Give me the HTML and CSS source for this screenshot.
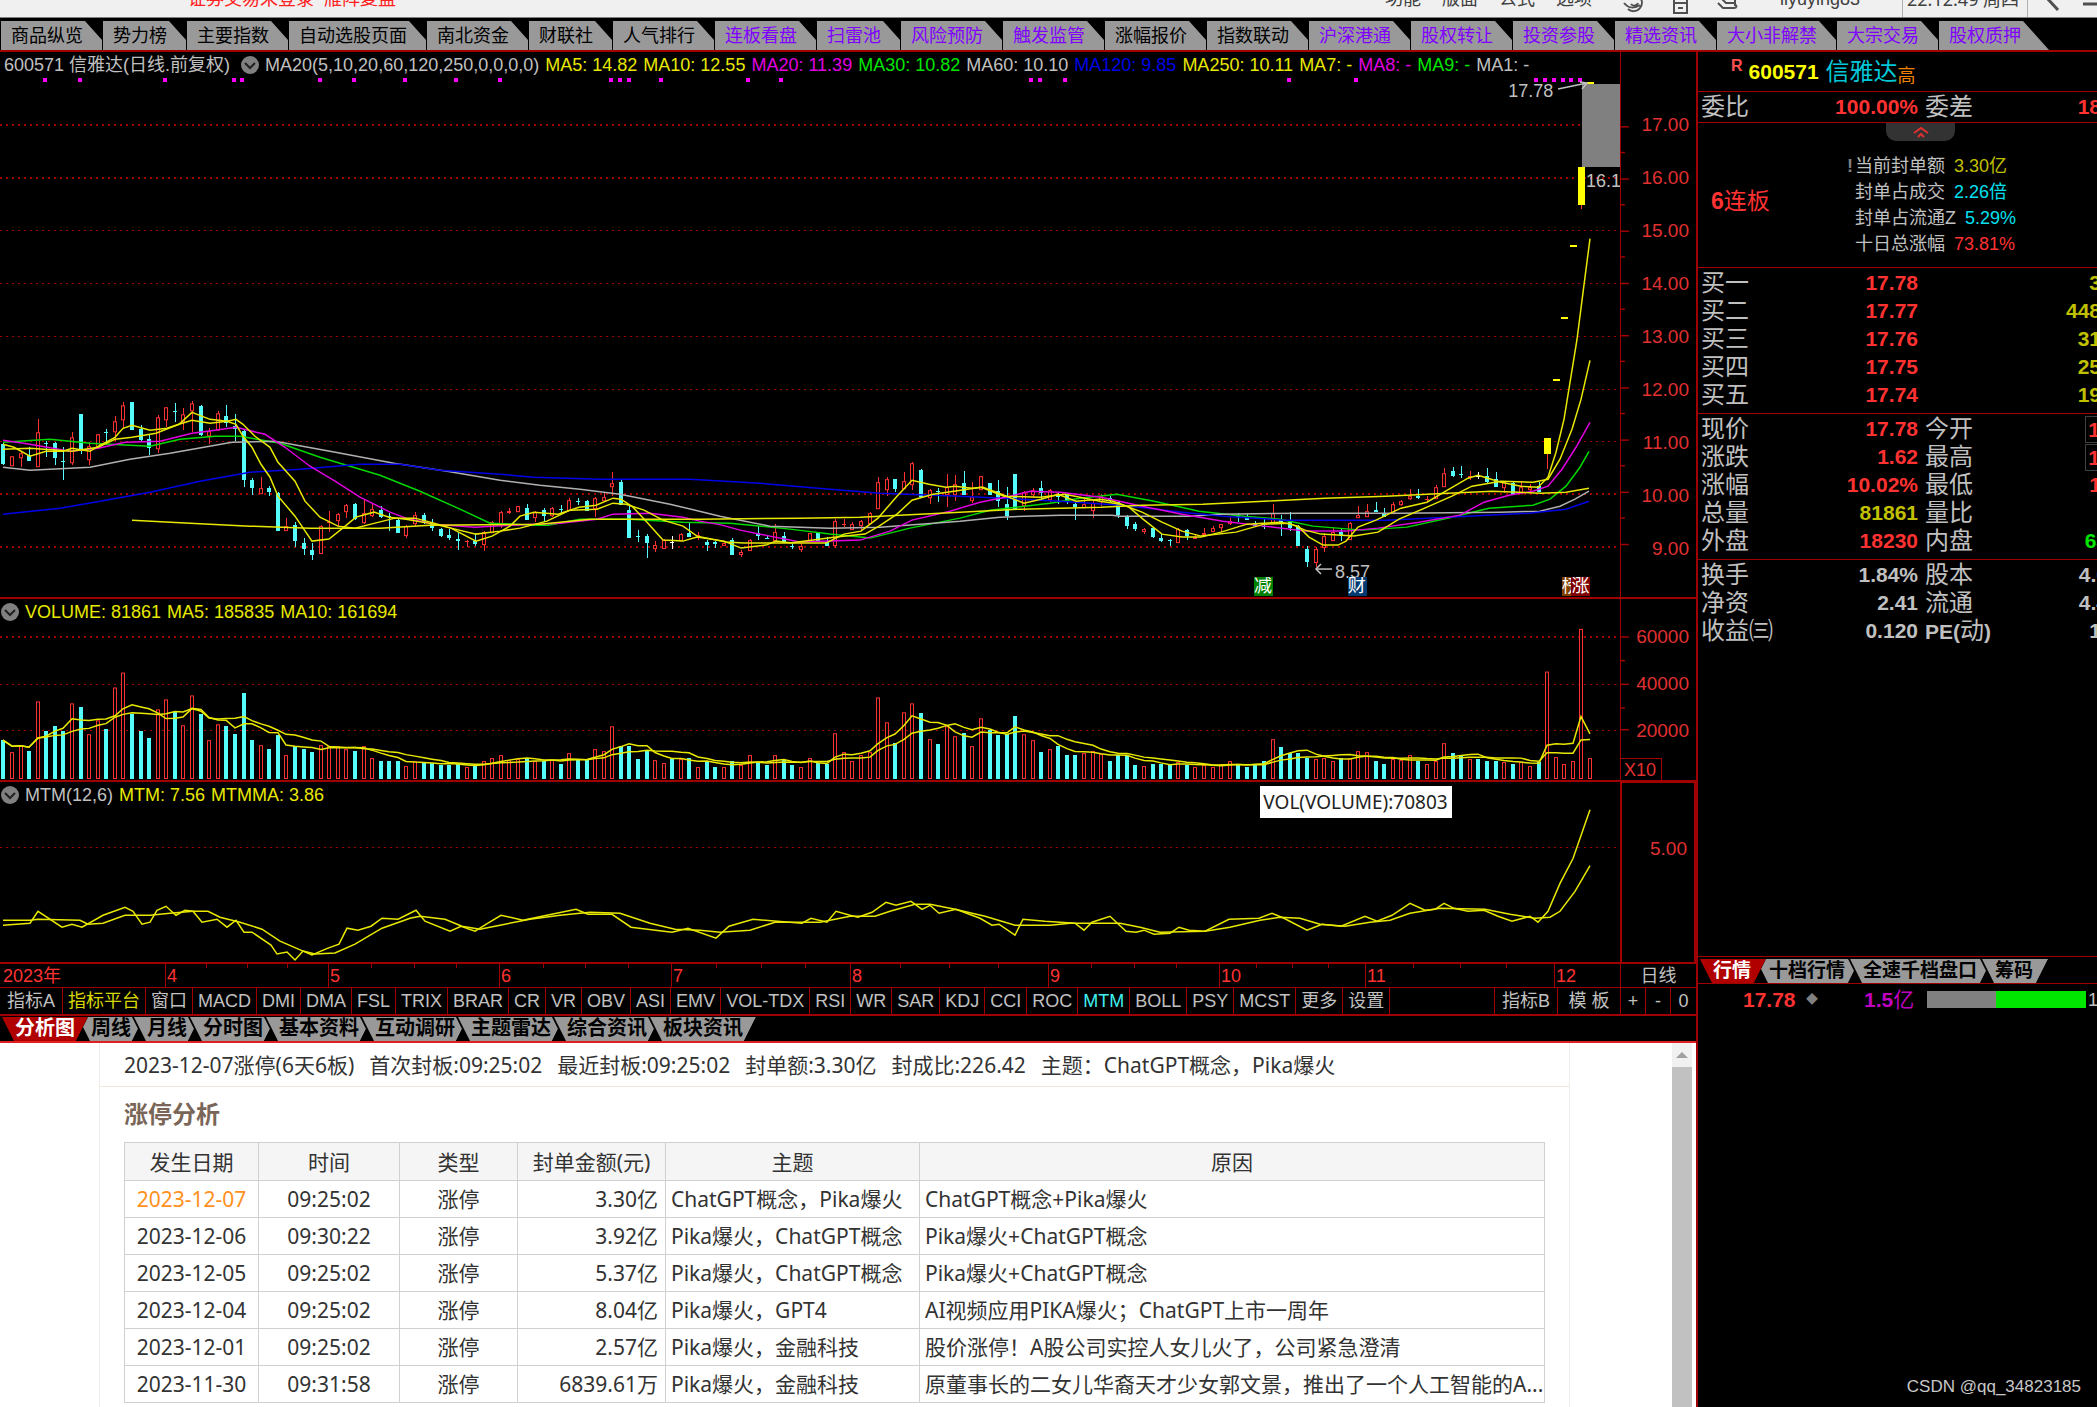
FILE: index.html
```html
<!DOCTYPE html>
<html lang="zh-CN">
<head>
<meta charset="utf-8">
<title>信雅达 600571</title>
<link rel="stylesheet" href="styles.css">
</head>
<body>
<div class="app">
  <header class="menubar">
    <span class="login">证券交易未登录&nbsp; 雁阵复盘</span>
    <nav class="menu">
      <a href="#">功能</a><a href="#">版面</a><a href="#">公式</a><a href="#">选项</a>
    </nav>
    <div class="tools">
      <svg width="22" height="20" viewBox="0 0 22 20"><path d="M1 8c4 5 10 6 16 2M5 14c3 3 9 3 12-1 3-4 2-8 0-10M8 9a4 4 0 0 0 7-1" /></svg>
      <svg width="16" height="20" viewBox="0 0 16 20"><path d="M1 0v18h13V0M1 8h13M5 4h5M5 13h5" /></svg>
      <svg width="22" height="20" viewBox="0 0 22 20"><path d="M1 8l5 5h11c3 0 3-3 1-3M4 3l5 5h8M18 3v8" /></svg>
    </div>
    <span class="user">liyuying83</span>
    <time class="clock">22:12:49 周四</time>
    <svg class="back" width="57" height="20" viewBox="0 0 57 20"><path d="M6 2l12 13M43 9h14" stroke-width="3"/></svg>
  </header>

  <nav class="toptabs">
    <button>商品纵览</button><button>势力榜</button><button>主要指数</button><button>自动选股页面</button><button>南北资金</button><button>财联社</button><button>人气排行</button><button class="v">连板看盘</button><button class="v">扫雷池</button><button class="v">风险预防</button><button class="v">触发监管</button><button>涨幅报价</button><button>指数联动</button><button class="v">沪深港通</button><button class="v">股权转让</button><button class="v">投资参股</button><button class="v">精选资讯</button><button class="v">大小非解禁</button><button class="v">大宗交易</button><button class="v">股权质押</button>
  </nav>

  <div class="body">
    <main class="left">
      <section class="pane price">
        <div class="plot">
          <svg id="price" viewBox="0 0 1620 546" preserveAspectRatio="none"></svg>
          <div class="legend">
            <span>600571 信雅达(日线.前复权)</span>
            <svg class="fold" viewBox="0 0 18 18"><circle cx="9" cy="9" r="9"/><path d="M4 7l5 5 5-5"/></svg>
            <span>MA20(5,10,20,60,120,250,0,0,0,0)</span>
            <span class="y">MA5: 14.82</span><span class="y">MA10: 12.55</span><span class="m">MA20: 11.39</span><span class="g">MA30: 10.82</span><span>MA60: 10.10</span><span class="b">MA120: 9.85</span><span class="y">MA250: 10.11</span><span class="y">MA7: -</span><span class="m">MA8: -</span><span class="g">MA9: -</span><span>MA1: -</span>
          </div>
          <span class="mark high">17.78</span>
          <span class="mark prev">16.1</span>
          <span class="mark low">8.57</span>
          <span class="badge jian">减</span>
          <span class="badge cai">财</span>
          <span class="badge bang">榜</span>
          <span class="badge zhang">涨</span>
        </div>
        <div class="scale">
          <svg id="priceScale" viewBox="0 0 76 546"></svg>
          <div class="nums"><span>17.00</span><span>16.00</span><span>15.00</span><span>14.00</span><span>13.00</span><span>12.00</span><span>11.00</span><span>10.00</span><span>9.00</span></div>
        </div>
      </section>

      <section class="pane volume">
        <div class="plot">
          <svg id="volume" viewBox="0 0 1620 182" preserveAspectRatio="none"></svg>
          <div class="legend">
            <svg class="fold" viewBox="0 0 18 18"><circle cx="9" cy="9" r="9"/><path d="M4 7l5 5 5-5"/></svg>
            <span class="y">VOLUME: 81861</span><span class="y">MA5: 185835</span><span class="y">MA10: 161694</span>
          </div>
        </div>
        <div class="scale">
          <svg id="volumeScale" viewBox="0 0 76 182"></svg>
          <div class="nums"><span>60000</span><span>40000</span><span>20000</span></div>
          <span class="unit">X10</span>
        </div>
      </section>

      <section class="pane mtm">
        <div class="plot">
          <svg id="mtm" viewBox="0 0 1620 181" preserveAspectRatio="none"></svg>
          <div class="legend">
            <svg class="fold" viewBox="0 0 18 18"><circle cx="9" cy="9" r="9"/><path d="M4 7l5 5 5-5"/></svg>
            <span>MTM(12,6)</span><span class="y">MTM: 7.56</span><span class="y">MTMMA: 3.86</span>
          </div>
          <div class="tip" role="tooltip">VOL(VOLUME):70803</div>
        </div>
        <div class="scale framed"><div class="nums"><span>5.00</span></div></div>
      </section>

      <div class="months">
        <div class="track"><span class="first">2023年</span><span>4</span><span>5</span><span>6</span><span>7</span><span>8</span><span>9</span><span>10</span><span>11</span><span class="last">12</span></div>
        <button class="period">日线</button>
      </div>

      <div class="indicators">
        <button class="wide">指标A</button><button class="on">指标平台</button><button>窗口</button><button>MACD</button><button>DMI</button><button>DMA</button><button>FSL</button><button>TRIX</button><button>BRAR</button><button>CR</button><button>VR</button><button>OBV</button><button>ASI</button><button>EMV</button><button>VOL-TDX</button><button>RSI</button><button>WR</button><button>SAR</button><button>KDJ</button><button>CCI</button><button>ROC</button><button class="cur">MTM</button><button>BOLL</button><button>PSY</button><button>MCST</button><button>更多</button><button>设置</button>
        <div class="end"><button>指标B</button><button>模 板</button></div>
        <div class="zoom"><button>+</button><button>-</button><button>0</button></div>
      </div>

      <nav class="slants lefttabs">
        <button class="sel"><span>分析图</span></button><button><span>周线</span></button><button><span>月线</span></button><button><span>分时图</span></button><button><span>基本资料</span></button><button><span>互动调研</span></button><button><span>主题雷达</span></button><button><span>综合资讯</span></button><button><span>板块资讯</span></button>
      </nav>

      <section class="web">
        <article>
          <p class="summary"><span>2023-12-07涨停(6天6板)</span><span>首次封板:09:25:02</span><span>最近封板:09:25:02</span><span>封单额:3.30亿</span><span>封成比:226.42</span><span>主题：ChatGPT概念，Pika爆火</span></p>
          <h2>涨停分析</h2>
          <table>
            <colgroup><col class="c1"><col class="c2"><col class="c3"><col class="c4"><col class="c5"><col></colgroup>
            <thead><tr><th>发生日期</th><th>时间</th><th>类型</th><th>封单金额(元)</th><th>主题</th><th>原因</th></tr></thead>
            <tbody>
              <tr class="hot"><td>2023-12-07</td><td>09:25:02</td><td>涨停</td><td>3.30亿</td><td>ChatGPT概念，Pika爆火</td><td>ChatGPT概念+Pika爆火</td></tr>
              <tr><td>2023-12-06</td><td>09:30:22</td><td>涨停</td><td>3.92亿</td><td>Pika爆火，ChatGPT概念</td><td>Pika爆火+ChatGPT概念</td></tr>
              <tr><td>2023-12-05</td><td>09:25:02</td><td>涨停</td><td>5.37亿</td><td>Pika爆火，ChatGPT概念</td><td>Pika爆火+ChatGPT概念</td></tr>
              <tr><td>2023-12-04</td><td>09:25:02</td><td>涨停</td><td>8.04亿</td><td>Pika爆火，GPT4</td><td>AI视频应用PIKA爆火；ChatGPT上市一周年</td></tr>
              <tr><td>2023-12-01</td><td>09:25:02</td><td>涨停</td><td>2.57亿</td><td>Pika爆火，金融科技</td><td>股价涨停！A股公司实控人女儿火了，公司紧急澄清</td></tr>
              <tr><td>2023-11-30</td><td>09:31:58</td><td>涨停</td><td>6839.61万</td><td>Pika爆火，金融科技</td><td>原董事长的二女儿华裔天才少女郭文景，推出了一个人工智能的A...</td></tr>
            </tbody>
          </table>
        </article>
        <div class="scrollbar"><svg viewBox="0 0 20 24"><path d="M4 15l6-6 6 6z"/></svg><i></i></div>
      </section>
    </main>

    <aside class="right">
      <h1><sup>R</sup><b>600571</b><span>信雅达</span><small>高</small></h1>
      <dl class="quote solo"><dt>委比</dt><dd class="r">100.00%</dd><dt>委差</dt><dd class="r">18</dd></dl>
      <section class="board">
        <button class="pull" aria-label="收起"><svg viewBox="0 0 16 12"><path d="M1 7l7-5 7 5M5 11l3-3 3 3"/></svg></button>
        <div class="streak"><b>6</b>连板</div>
        <ul>
          <li><i>!</i>当前封单额 <span class="dy">3.30亿</span></li>
          <li>封单占成交 <span class="c">2.26倍</span></li>
          <li>封单占流通Z <span class="c">5.29%</span></li>
          <li>十日总涨幅 <span class="r">73.81%</span></li>
        </ul>
      </section>
      <dl class="quote">
        <dt>买一</dt><dd class="r">17.78</dd><dt></dt><dd class="dy">3</dd>
        <dt>买二</dt><dd class="r">17.77</dd><dt></dt><dd class="dy">448</dd>
        <dt>买三</dt><dd class="r">17.76</dd><dt></dt><dd class="dy">31</dd>
        <dt>买四</dt><dd class="r">17.75</dd><dt></dt><dd class="dy">25</dd>
        <dt>买五</dt><dd class="r">17.74</dd><dt></dt><dd class="dy">19</dd>
      </dl>
      <dl class="quote">
        <dt>现价</dt><dd class="r">17.78</dd><dt>今开</dt><dd class="r box">1</dd>
        <dt>涨跌</dt><dd class="r">1.62</dd><dt>最高</dt><dd class="r box">1</dd>
        <dt>涨幅</dt><dd class="r">10.02%</dd><dt>最低</dt><dd class="r">1</dd>
        <dt>总量</dt><dd class="dy">81861</dd><dt>量比</dt><dd></dd>
        <dt>外盘</dt><dd class="r">18230</dd><dt>内盘</dt><dd class="g cut">63</dd>
      </dl>
      <dl class="quote open">
        <dt>换手</dt><dd>1.84%</dd><dt>股本</dt><dd class="cut">4.0</dd>
        <dt>净资</dt><dd>2.41</dd><dt>流通</dt><dd class="cut">4.4</dd>
        <dt>收益㈢</dt><dd>0.120</dd><dt><b>PE(</b>动<b>)</b></dt><dd>1</dd>
      </dl>
      <nav class="slants righttabs">
        <button class="sel"><span>行情</span></button><button><span>十档行情</span></button><button><span>全速千档盘口</span></button><button><span>筹码</span></button>
      </nav>
      <div class="deal"><b class="r">17.78</b><i>◆</i><span class="amt"><b>1.5</b>亿</span><span class="bar"></span><em>10</em></div>
      <footer>CSDN @qq_34823185</footer>
    </aside>
  </div>
</div>
<script src="chart.js"></script>
</body>
</html>
```
FILE: styles.css
```css
* { box-sizing: border-box; }
body {
  margin: 0;
  background: #000;
  color: #c0c0c0;
  font: 18px/20px "Liberation Sans", "Noto Sans CJK SC", sans-serif;
}
button { margin: 0; padding: 0; border: 0; background: none; color: inherit; font: inherit; white-space: nowrap; }
a { color: inherit; text-decoration: none; }
i, em { font-style: normal; }
.app { display: flex; flex-direction: column; height: 100vh; overflow: hidden; }
.y { color: #e8e800; }
.m { color: #e000e0; }
.g { color: #00e600; }
.b { color: #0000e8; }
.r { color: #ff3232; }
.c { color: #00e0f0; }
.dy { color: #c0c000; }

/* menu bar */
.menubar {
  display: flex; align-items: flex-end; flex: none;
  height: 18px; padding: 0 0 8px 188px;
  background: #f0f0f0; border-bottom: 1px solid #808080; color: #404040;
  overflow: hidden;
}
.login { color: #ff2020; margin-right: auto; }
.menu { display: flex; gap: 21px; margin-right: 31px; }
.tools { display: flex; gap: 28px; margin-right: 41px; }
.menubar svg { display: block; fill: none; stroke: #505050; stroke-width: 2; margin-bottom: -6px; }
.user { width: 122px; }
.clock { width: 126px; margin-bottom: -8px; padding: 0 4px 8px; border: solid #b0b0b0; border-width: 0 1px; font-family: "Noto Sans", "Noto Sans CJK SC", sans-serif; }
.back { margin-left: 12px; }

.toptabs { display: flex; flex: none; height: 34px; padding-top: 3px; background: #000; border-bottom: 2px solid #a00000; overflow: hidden; }
.toptabs button {
  flex: none; height: 29px; padding: 0 28px 0 10px; margin-right: -9px;
  background: #999; color: #000; border-left: 1px solid #000;
  clip-path: polygon(0 0, calc(100% - 26px) 0, 100% 100%, 0 100%);
}
.toptabs .v { color: #8000ff; }

.body { display: grid; grid-template-columns: minmax(0, 1fr) 400px; flex: 1; min-height: 0; }
.left { display: flex; flex-direction: column; min-width: 0; min-height: 0; border-right: 1px solid #a00000; }

/* chart panes */
.pane { display: grid; grid-template-columns: minmax(0, 1fr) 76px; flex: none; border-bottom: 2px solid #a00000; }
.price { height: 547px; }
.volume { height: 183px; }
.mtm { height: 182px; }
.plot, .scale { position: relative; display: grid; min-width: 0; min-height: 0; }
.plot > *, .scale > * { grid-area: 1 / 1; }
.plot > svg, .scale > svg { width: 100%; height: 100%; min-height: 0; }
.scale { border-left: 1px solid #a00000; color: #e03030; }
.framed { border: 2px solid #a00000; border-top-width: 1px; border-bottom: 0; }
.nums { display: flex; flex-direction: column; padding-right: 7px; text-align: right; font-size: 19px; }
.price .nums { padding-top: 46px; line-height: 53px; }
.volume .nums { padding-top: 14px; line-height: 47px; }
.mtm .nums { padding-top: 56px; }
.unit { align-self: end; justify-self: start; padding: 1px 5px 0 3px; border: solid #a00000; border-width: 1px 1px 0 0; }
.legend { display: flex; align-items: center; align-self: start; gap: 6px; height: 26px; padding-left: 4px; white-space: nowrap; }
.volume .legend, .mtm .legend { padding-left: 1px; height: 25px; }
.price .fold { margin-left: 5px; }
.fold { width: 18px; height: 18px; fill: #808080; stroke: #202020; stroke-width: 2; }
.fold circle { stroke: none; }
.fold path { fill: none; }
.mark, .badge, .tip { position: absolute; }
.high { left: 93.1%; top: 29px; }
.prev { left: 97.9%; top: 119px; }
.low { left: 82.4%; top: 510px; }
.badge { top: 525px; width: 19px; height: 19px; line-height: 19px; color: #fff; overflow: hidden; }
.jian { left: 77.4%; background: #008000; }
.cai { left: 83.2%; background: #003a70; }
.bang { left: 96.4%; width: 10px; background: #804000; }
.zhang { left: 97%; background: #800000; }
.tip { left: 77.8%; top: 4px; padding: 0 3px; width: 192px; height: 32px; line-height: 32px; background: #fff; color: #222; font-family: "Noto Sans", sans-serif; font-size: 19px; white-space: nowrap; }

.months { display: grid; grid-template-columns: minmax(0, 1fr) 76px; flex: none; height: 24px; border-bottom: 1px solid #a00000; }
.track { display: grid; grid-template-columns: 165fr 163fr 171fr 172fr 179fr 198fr 171fr 146fr 189fr 66fr; color: #ff3232; line-height: 24px; }
.track span {
  padding-left: 1px; border-left: 1px solid #a00000;
  background: linear-gradient(#a00000, #a00000) 25% 0 / 1px 4px, linear-gradient(#a00000, #a00000) 50% 0 / 1px 4px, linear-gradient(#a00000, #a00000) 75% 0 / 1px 4px;
  background-repeat: no-repeat;
}
.track .first, .track .last { background: none; }
.track .first { border: 0; padding-left: 3px; }
.period { border-left: 1px solid #a00000; }

.indicators { display: flex; flex: none; height: 28px; border-bottom: 2px solid #a00000; }
.indicators button { padding: 0 5px; border-right: 1px solid #a00000; }
.indicators .wide { padding: 0 7px; }
.indicators .on { color: #d8d800; }
.indicators .cur { color: #40f0f0; }
.end { display: flex; margin-left: auto; border-left: 1px solid #a00000; }
.indicators .end button { width: 63px; }
.zoom { display: grid; grid-template-columns: repeat(3, 1fr); width: 75px; }
.indicators .zoom button:last-child { border: 0; }

/* slanted tabs */
.slants { display: flex; flex: none; background: #000; overflow: hidden; }
.slants button, .slants span { clip-path: polygon(0 0, 100% 0, calc(100% - 12px) 100%, 12px 100%); }
.slants button { flex: none; background: #000; color: #000; font-weight: bold; margin-right: -12px; padding: 0 0 0 2px; }
.slants span { display: block; height: 24px; line-height: 23px; padding: 0 13px 0 13px; background: #999; }
.slants .sel { position: relative; z-index: 1; color: #fff; }
.slants .sel span { background: #b00000; }
.lefttabs { height: 27px; padding: 1px 0 0; border-bottom: 2px solid #e02020; font-size: 20px; }
.righttabs { height: 28px; padding: 2px 0 0; border: solid #a00000; border-width: 1px 0; font-size: 19px; }
.righttabs span { padding: 0 15px 0 13px; }

/* web page area */
.web { display: flex; justify-content: space-between; flex: 1; min-height: 0; overflow: hidden; background: #fff; color: #333; font: 21px/30px "Noto Sans", "Noto Sans CJK SC", sans-serif; padding-left: 99px; }
.web article { flex: none; width: calc(100% - 126px); border: solid #f0ece8; border-width: 0 1px; white-space: nowrap; }
.summary { display: flex; gap: 15px; margin: 0; padding: 7px 0 6px 24px; border-bottom: 1px solid #f0e6dc; }
.web h2 { margin: 0; padding: 12px 24px 13px; font-size: 24px; line-height: 30px; color: #7a6658; }
.web table { width: calc(100% - 48px); margin-left: 24px; border-collapse: collapse; table-layout: fixed; }
.web th, .web td { height: 38px; padding: 0 5px; border: 1px solid #d0d0d0; font-weight: normal; text-align: center; overflow: hidden; }
.web td { height: 37px; }
.web th { background: #f5f5f5; }
.c1 { width: 134px; } .c2 { width: 141px; } .c3 { width: 118px; } .c4 { width: 148px; } .c5 { width: 254px; }
.web td:nth-child(4) { text-align: right; padding-right: 7px; }
.web td:nth-child(n+5) { text-align: left; }
.hot td:first-child { color: #ff9020; }
.scrollbar { display: flex; flex-direction: column; width: 20px; background: #f1f1f1; margin-right: 4px; }
.scrollbar svg { height: 24px; fill: #a0a0a0; }
.scrollbar i { flex: 1; background: #c1c1c1; }

/* quote column */
.right { display: flex; flex-direction: column; min-width: 0; overflow: hidden; border-left: 1px solid #a00000; }
.right h1 { display: flex; align-items: center; height: 40px; margin: 0; padding-left: 33px; border-bottom: 1px solid #a00000; font-size: 24px; font-weight: normal; color: #00c8d8; }
.right sup { align-self: flex-start; margin: 4px 6px 0 0; font-size: 16px; font-weight: bold; color: #ff5050; }
.right h1 b { width: 77px; font-size: 21px; color: #ff0; }
.right small { font-size: 18px; color: #f08000; padding-top: 8px; }
.quote { display: grid; grid-template-columns: 80px 137px 90px 1fr; grid-auto-rows: 28px; align-items: center; margin: 0 -4px 0 0; padding: 1px 0 4px 3px; border-bottom: 1px solid #a00000; font-size: 24px; line-height: 28px; }
.quote.open { border: 0; }
.quote.solo { height: 31px; padding-bottom: 1px; }
.quote dt { white-space: nowrap; }
.quote dt b { font-size: 21px; }
.quote dd { margin: 0; text-align: right; font-size: 21px; font-weight: bold; }
.quote dt:nth-of-type(even) { padding-left: 7px; }
.quote .box { justify-self: end; width: 16px; border: 1px solid #404040; line-height: 25px; }
.quote .cut { margin-right: -7px; }
.board { display: grid; grid-template-columns: 150px 1fr; grid-template-rows: 18px 1fr; height: 145px; border-bottom: 1px solid #a00000; }
.pull { grid-column: 1 / 3; width: 69px; height: 18px; margin-left: 188px; background: #333; border-radius: 0 0 10px 10px; line-height: 0; }
.pull svg { width: 16px; height: 12px; fill: none; stroke: #e03030; stroke-width: 2; }
.streak { padding: 46px 0 0 13px; font-size: 23px; line-height: 28px; color: #ff3232; }
.board ul { list-style: none; margin: 0; padding: 12px 0 0 7px; line-height: 26px; }
.board li { white-space: pre; }
.board li span { padding-left: 4px; }
.board li i { display: inline-block; width: 8px; margin-left: -8px; font-weight: bold; color: #808080; }
.righttabs { margin-top: auto; }
.deal { display: flex; align-items: center; height: 31px; padding-left: 45px; font-size: 21px; }
.deal i { width: 67px; padding-left: 10px; font-size: 12px; color: #808080; }
.deal i, .bar { flex: none; }
.amt { flex: none; width: 61px; color: #c000c0; white-space: nowrap; }
.bar { width: 159px; height: 17px; background: linear-gradient(90deg, #808080 69px, #00e600 69px); }
.deal em { padding-left: 2px; font-size: 18px; }
.deal b { flex: none; width: 53px; }
.deal .amt { display: flex; }
.deal .amt b { width: auto; }
.deal .amt { width: 61px; }
.deal i { width: 68px; }
.deal .bar { margin-left: 2px; }
.right footer { height: 392px; padding: 362px 16px 0 0; text-align: right; font-size: 17px; color: #c8c8c8; }
```
FILE: chart.js
```js
// Daily bars: direction (r up, c down, w flat), high, body top, body bottom, low.
const bars = `c391 393 413 414|r405 405 415 415|r400 402 407 416|c396 404 410 410|r368 381 416 416|c390 392 393 406|c391 392 407 414|c396 410 411 429|r381 386 412 414|c363 363 400 403
r391 395 409 414|r383 383 397 397|c378 381 382 393|r365 370 381 390|r351 354 369 378|c351 351 379 379|c374 378 389 390|c383 388 397 404|r364 366 398 402|r356 356 369 376
c352 360 361 371|r357 363 371 379|r350 352 360 381|c354 355 384 385|r377 380 385 393|r360 362 379 380|c354 365 372 376|c363 375 378 390|c379 380 429 436|c427 429 437 444
r426 437 443 443|c435 437 441 445|c441 442 480 480|r467 475 480 480|c471 474 490 496|c487 492 498 504|c492 499 504 509|r474 475 503 503|r460 471 472 481|r462 463 470 476
r453 454 461 467|c452 453 468 469|r449 462 472 473|r453 458 465 466|c455 459 466 467|c462 465 466 480|c468 469 482 482|r474 475 485 487|r461 464 473 475|c462 464 472 473
c468 473 477 480|c477 478 485 486|c478 484 487 489|c482 488 490 499|r489 490 491 496|c482 490 493 495|r480 481 494 500|r470 471 482 482|r460 461 473 477|r457 460 462 463
r455 455 461 461|c453 457 469 469|r460 461 467 471|c457 459 465 470|r456 457 465 466|c454 458 459 462|r447 449 460 460|c447 450 451 454|c449 450 460 460|r446 447 458 466
r441 446 450 451|r421 432 436 445|c429 431 454 454|c455 459 487 487|c479 485 486 491|c483 485 492 507|r490 494 498 501|r488 489 498 498|w485 491 492 498|r482 483 490 490
c472 482 486 486|r481 484 485 489|c489 491 494 500|c490 491 493 497|r491 492 495 495|c487 489 504 504|r499 501 504 506|r488 489 500 500|c475 482 485 489|c484 487 488 488
r473 481 490 490|c481 485 492 492|c493 495 496 498|r492 495 499 501|r482 482 490 490|c481 482 490 490|c486 491 495 495|r468 470 495 497|r468 473 474 476|r471 473 479 479
r469 470 475 480|r461 462 473 473|r426 431 458 458|r426 428 439 445|c428 428 438 441|r421 430 438 438|r411 412 434 439|c418 419 446 446|r438 439 447 453|c437 440 441 451
r423 436 444 456|r424 433 444 450|c420 432 444 444|r431 446 450 452|r425 425 439 439|c432 432 444 444|c429 440 450 456|c436 453 465 469|c423 423 458 458|r440 441 455 460
r437 439 444 447|c430 437 442 450|r438 439 449 451|c441 443 446 453|c442 444 451 453|c451 453 456 469|r446 453 457 457|r449 452 460 467|r443 445 451 455|c445 447 449 451
c450 451 464 467|c464 466 475 478|c471 473 478 480|r477 478 481 483|c476 477 486 487|c482 487 490 491|c488 489 490 495|r477 478 492 492|c478 479 485 489|r483 486 488 488
r477 482 484 486|r475 477 481 481|r473 473 477 481|r467 470 473 474|c462 465 466 471|c463 465 469 469|c470 472 475 475|c468 475 476 478|r453 462 472 472|c464 468 473 485
c461 471 477 480|c474 475 495 495|c495 498 511 516|r496 498 512 516|r482 485 497 501|r476 481 490 490|c478 481 485 490|r471 472 489 489|r455 464 467 467|r453 460 466 466
c451 459 461 461|c457 462 466 466|r451 453 463 463|r449 450 454 455|r438 445 448 449|c438 445 447 448|r445 448 449 451|r434 436 448 448|r417 422 436 436|c416 420 425 426
c415 423 424 427|r420 425 427 429|w421 425 426 428|c417 425 431 432|c421 428 436 436|r430 431 437 442|c430 432 443 443|r430 436 443 443|r433 436 439 441|c431 435 441 441
y387 387 403 418|y329 328 330 330|y266 265 267 267|y194 193 195 195|y115 115 153 157|y30 30 32 32`.split(/[|\n]/);

const volumes = [39,27,34,28,78,48,53,48,76,72,45,59,50,92,107,65,48,41,70,80,67,54,84,65,39,55,53,45,86,39,34,30,44,24,33,30,27,34,33,33,30,28,33,21,18,18,18,13,18,16,16,14,14,15,12,13,18,21,24,19,20,21,18,18,19,15,26,19,19,30,28,53,33,33,20,28,19,16,20,20,21,12,18,12,12,18,14,24,17,14,24,19,14,12,21,16,15,46,27,18,24,27,82,57,36,67,76,66,40,35,53,43,46,33,61,49,44,45,63,45,39,27,30,33,24,24,26,28,25,18,24,24,14,13,15,15,15,17,14,12,14,12,15,18,14,12,15,18,40,32,26,26,21,20,21,18,21,21,28,27,18,15,20,19,24,18,15,18,36,26,23,20,20,18,18,17,15,17,13,17,108,22,15,18,151,21];

const averages = [
  ['#00d800', '3,391 50,388 90,392 150,395 180,388 215,385 240,385 280,392 320,406 380,424 420,440 460,458 490,472 534,474 548,474 580,468 630,468 683,471 730,472 790,478 830,483 870,487 910,477 960,467 990,459 1050,452 1080,447 1117,443 1154,450 1199,460 1244,465 1280,468 1313,475 1362,479 1407,476 1452,466 1489,457 1533,454 1550,448 1566,435 1580,416 1589,400'],
  ['#b0b0b0', '3,416 30,419 90,416 130,408 170,402 232,391 275,390 330,400 394,412 447,420 500,429 540,434 580,438 620,443 670,453 720,465 770,475 830,477 880,476 920,473 960,470 1000,466 1060,464 1112,464 1120,465 1190,465 1220,463 1300,462 1400,462 1500,461 1540,460 1560,455 1575,448 1589,440'],
  ['#0000e8', '3,463 60,457 100,450 150,441 200,430 250,421 300,418 360,413 400,413 440,419 500,423 534,426 600,428 690,428 760,432 830,438 880,442 960,445 1060,450 1121,454 1182,461 1223,465 1284,469 1386,469 1448,466 1529,462 1566,458 1589,450'],
  ['#e000e0', '3,389 30,393 70,400 98,397 125,391 160,390 192,382 215,379 236,376 265,383 285,396 310,415 335,430 360,446 390,461 406,467 434,473 475,476 534,473 560,472 597,468 613,463 650,462 683,466 700,470 722,474 740,479 770,485 800,491 860,489 890,480 912,469 950,460 980,451 1010,445 1030,440 1060,441 1101,446 1142,455 1182,463 1223,470 1264,475 1305,480 1346,480 1378,477 1419,471 1460,464 1484,451 1509,444 1533,440 1548,435 1562,418 1576,396 1590,371'],
  ['#e8e800', '132,469 190,472 250,475 310,477 380,477 430,474 540,473 590,468 700,468 800,467 860,466 900,464 960,461 1020,458 1101,456 1142,454 1203,453 1264,450 1325,447 1386,445 1448,442 1492,440 1541,442 1566,441 1589,437'],
  ['#e8e800', '3,398 30,397 72,400 98,396 115,388 132,386 156,382 179,373 192,369 210,372 227,370 236,368 243,373 255,385 270,396 278,411 295,430 305,450 320,466 338,475 355,477 375,472 395,467 415,467 434,472 451,477 476,483 500,480 520,477 547,470 570,459 597,458 613,452 626,453 644,459 663,469 683,475 697,485 726,491 744,492 769,492 790,492 836,486 865,483 879,475 897,463 912,449 933,443 954,440 981,436 1004,445 1040,446 1065,443 1100,450 1121,453 1142,461 1162,471 1182,480 1201,485 1236,481 1264,473 1289,472 1305,479 1321,483 1354,485 1378,481 1399,468 1427,456 1452,445 1472,435 1501,430 1533,431 1548,428 1560,408 1572,378 1581,348 1590,309'],
  ['#e8e800', '3,393 14,396 30,405 46,400 63,400 72,397 90,400 98,395 115,386 123,377 132,374 150,379 167,377 179,373 192,361 210,368 227,370 236,373 243,385 252,396 261,413 270,426 278,445 295,465 312,490 329,488 344,476 356,466 374,461 389,466 406,468 434,473 451,477 476,490 492,485 510,475 520,465 534,461 558,463 579,456 596,454 613,447 621,448 633,456 647,471 663,489 683,490 697,486 724,490 741,497 766,494 776,490 792,492 826,492 844,483 861,480 878,467 897,445 912,429 929,433 946,436 955,435 972,437 983,436 1004,444 1024,452 1041,448 1058,443 1076,450 1100,448 1113,450 1129,456 1143,468 1162,483 1182,486 1201,486 1221,481 1247,473 1281,471 1298,475 1309,486 1323,494 1338,494 1346,490 1358,476 1376,469 1401,457 1427,451 1444,441 1468,427 1478,424 1501,431 1521,435 1538,436 1548,426 1556,401 1564,368 1577,288 1583,241 1590,187'],
];

const momentum = '3,144 30,142 38,130 62,146 72,143 82,146 103,134 125,126 133,130 142,143 150,141 157,129 166,125 176,134 185,129 193,130 202,141 217,138 227,146 236,139 244,151 252,151 271,164 277,173 287,171 295,179 303,170 312,174 328,167 339,163 347,147 358,149 371,145 382,137 398,138 416,129 425,140 450,150 461,145 475,150 488,142 501,134 523,139 542,135 576,128 588,133 612,133 631,146 672,151 688,147 716,157 729,145 753,138 802,142 811,137 827,141 836,130 850,134 858,136 872,131 886,121 896,124 911,120 922,128 930,124 939,132 956,128 980,137 992,144 999,143 1015,154 1023,138 1045,140 1075,142 1084,149 1092,141 1110,135 1126,150 1136,151 1144,149 1154,153 1170,152 1179,146 1189,149 1205,150 1229,138 1259,137 1272,132 1284,137 1307,149 1322,143 1341,145 1365,135 1377,140 1392,134 1410,122 1425,129 1435,128 1444,122 1454,127 1468,130 1484,129 1498,135 1512,140 1530,135 1538,141 1548,130 1560,102 1573,77 1590,28';
const momentumAvg = '3,139 30,139 38,138 80,139 88,143 103,142 125,134 150,134 170,132 193,130 208,130 220,136 240,141 262,148 280,160 303,170 315,173 335,172 355,163 382,147 410,137 420,135 445,138 462,145 480,148 500,144 530,138 560,134 590,131 620,132 650,142 675,148 700,149 720,151 750,149 775,141 820,141 850,135 875,135 890,130 915,123 930,123 955,128 985,135 1015,144 1050,144 1070,142 1120,142 1140,146 1160,151 1205,150 1230,146 1260,139 1280,136 1300,137 1320,143 1345,145 1370,141 1390,139 1410,132 1440,127 1485,128 1510,133 1535,137 1550,136 1560,130 1575,110 1590,84';

const signals = [45,80,165,234,242,320,354,405,456,500,611,620,629,661,748,781,1031,1040,1065,1289,1356,1536,1545,1554,1563,1571,1580];

const colors = { r: '#ff3232', c: '#54fcfc', w: '#ffffff', y: '#ffff00' };
const xAt = i => Math.round(3.4 + i * 8.576);
const rect = (x, y, w, h, attrs) => `<rect x="${x}" y="${y}" width="${w}" height="${h}" ${attrs}/>`;
const line = (pts, color, extra = '') => `<polyline points="${pts}" fill="none" stroke="${color}" stroke-width="1.5" ${extra}/>`;
const rule = y => `<line x1="0" x2="1620" y1="${y}" y2="${y}" stroke="#a00000" stroke-width="1.5" stroke-dasharray="2 4"/>`;
const put = (id, html) => { document.getElementById(id).innerHTML = html; };
const crisp = html => `<g shape-rendering="crispEdges">${html}</g>`;

function hollow(x, y, h, color) {
  return rect(x - 1.5, y + 0.5, 3, Math.max(h - 1, 1), `fill="#000" stroke="${color}"`);
}

let price = '';
for (let k = 0; k < 9; k++) price += rule(73 + Math.round(k * 52.9));
bars.forEach((b, i) => {
  const kind = b[0], color = colors[kind], x = xAt(i);
  const [hi, top, bottom, lo] = b.slice(1).split(' ').map(Number);
  price += rect(x - 0.5, hi, 1, Math.max(lo - hi, 1), `fill="${kind === 'y' ? '#ff3232' : color}"`);
  if (kind === 'r' && bottom - top > 2) price += hollow(x, top, bottom - top, color);
  else {
    const w = kind === 'y' ? 7 : 4;
    price += rect(x - w / 2, top, w, Math.max(bottom - top, 1), `fill="${color}"`);
  }
});
signals.forEach(x => { price += rect(x - 2, 26, 4, 4, 'fill="#ff00ff"'); });
price += rect(1582, 32, 38, 83, 'fill="#808080"');
price = crisp(price) + averages.map(([c, p]) => line(p, c)).join('');
price += line('1558,37 1587,31', '#c0c0c0') + line('1580,30 1587,31 1582,37', '#c0c0c0');
price += line('1332,518 1316,518', '#c0c0c0') + line('1321,523 1316,518 1321,513', '#c0c0c0');
put('price', price);

let vol = rule(38) + rule(86) + rule(132);
volumes.forEach((h, i) => {
  const up = 'ry'.includes(bars[i][0]);
  vol += up ? hollow(xAt(i), 181 - h, h, colors.r) : rect(xAt(i) - 2, 181 - h, 4, h, `fill="${colors.c}"`);
});
const mean = n => volumes.map((_, i) => {
  const part = volumes.slice(Math.max(0, i - n + 1), i + 1);
  return `${xAt(i)},${181 - part.reduce((a, v) => a + v, 0) / part.length}`;
}).join(' ');
put('volume', crisp(vol) + line(mean(5), '#e8e800') + line(mean(10), '#e8e800'));

put('mtm', crisp(rule(66)) + line(momentumAvg, '#e8e800') + line(momentum, '#e8e800'));

const tick = (y, w) => rect(0, y, w, 1.5, 'fill="#a00000"');
let ps = '';
for (let k = 0; k < 9; k++) ps += tick(72 + k * 52.9, 8) + (k < 8 ? tick(98 + k * 52.9, 4) : '');
put('priceScale', ps);
put('volumeScale', tick(37, 8) + tick(61, 4) + tick(85, 8) + tick(109, 4) + tick(131, 8));
```
